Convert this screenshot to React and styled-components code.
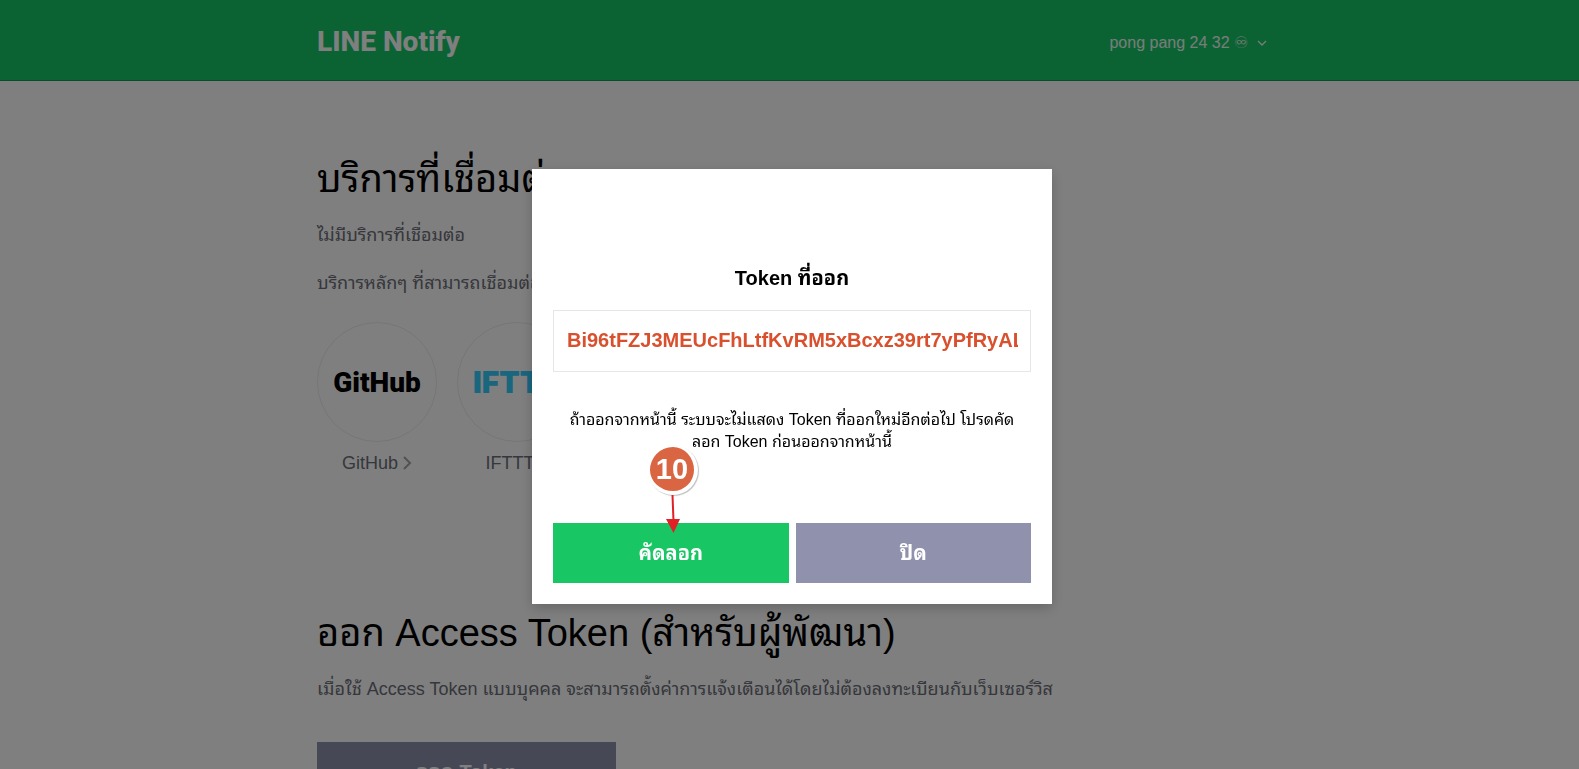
import { useState } from 'react';
import styled, { createGlobalStyle } from 'styled-components';

const GlobalStyle = createGlobalStyle`
    * {
        box-sizing: border-box;
    }

    body {
        margin: 0;
        height: 100vh;
        overflow: hidden;
        background: #ffffff;
        font-family: 'Liberation Sans', Arial, 'Noto Sans Thai Looped', 'Noto Sans Thai', sans-serif;
    }

    h1, h2, p, ul {
        margin: 0;
        padding: 0;
    }
`;

const Header = styled.header`
    padding-left: 5px;
    background: #17c667;
    border-bottom: 1px solid #12994f;
`;

const Container = styled.div`
    max-width: 950px;
    margin: 0 auto;
`;

const HeaderContainer = styled(Container)`
    display: flex;
    justify-content: space-between;
    align-items: center;
    height: 80px;
    padding-top: 4px;
`;

const Logo = styled.a`
    font-family: Roboto, sans-serif;
    font-size: 28px;
    font-weight: 800;
    line-height: 32px;
    color: #ffffff;
    text-decoration: none;
`;

const UserButton = styled.button`
    display: flex;
    align-items: center;
    gap: 9px;
    padding: 2px 0 0;
    border: 0;
    background: none;
    font-family: inherit;
    font-size: 16px;
    line-height: 20px;
    color: #f0faf4;
`;

const Main = styled.main`
    padding: 72px 0 0 5px;
`;

const Section = styled.section`
    padding-bottom: 133px;
`;

const Title = styled.h1`
    font-size: 38px;
    font-weight: 400;
    line-height: 52px;
    color: #000000;
`;

const Text = styled.p`
    margin-top: 18px;
    font-size: 18px;
    line-height: 30px;
    color: #6d6f78;

    ${Title} + & {
        margin-top: 15px;
    }
`;

const ServiceList = styled.ul`
    display: flex;
    gap: 20px;
    margin-top: 24px;
    list-style: none;
`;

const Service = styled.li`
    width: 120px;
`;

const ServiceLink = styled.a`
    display: flex;
    flex-direction: column;
    align-items: center;
    gap: 10px;
    color: #6d6f78;
    text-decoration: none;
`;

const ServiceLogo = styled.span`
    display: flex;
    justify-content: center;
    align-items: center;
    width: 120px;
    height: 120px;
    border: 1px solid #ececec;
    border-radius: 50%;
    font-family: ${({ $font }) => $font}, sans-serif;
    font-size: ${({ $size }) => $size}px;
    font-weight: 900;
    color: ${({ $color }) => $color};
`;

const ServiceName = styled.span`
    display: flex;
    align-items: center;
    gap: 5px;
    font-size: 18px;
    line-height: 22px;
`;

const Button = styled.button`
    height: 60px;
    padding: 0 0 4px;
    border: 0;
    background: ${({ $primary }) => ($primary ? '#18c664' : '#8f91ad')};
    font-family: inherit;
    font-size: 20px;
    font-weight: 700;
    color: #ffffff;
`;

const IssueButton = styled(Button)`
    width: 299px;
    margin-top: 38px;
`;

const Overlay = styled.div`
    position: fixed;
    inset: 0;
    display: flex;
    justify-content: center;
    align-items: center;
    padding: 4px 0 0 5px;
    background: rgba(0, 0, 0, 0.5);
`;

const Modal = styled.div`
    width: 520px;
    padding: 93px 21px 21px;
    background: #ffffff;
    box-shadow: 0 4px 12px rgba(0, 0, 0, 0.2);
`;

const ModalTitle = styled.h2`
    font-size: 20px;
    font-weight: 700;
    line-height: 32px;
    text-align: center;
    color: #000000;
`;

const TokenInput = styled.input`
    display: block;
    width: 100%;
    height: 62px;
    margin-top: 16px;
    padding: 0 12px 2px 13px;
    border: 1px solid #e6e6e6;
    border-radius: 0;
    background: #ffffff;
    font-family: inherit;
    font-size: 20px;
    font-weight: 700;
    color: #d9502e;
    outline: none;
`;

const Notice = styled.p`
    margin-top: 37px;
    font-size: 16px;
    line-height: 22px;
    text-align: center;
    color: #000000;
`;

const ButtonContainer = styled.div`
    position: relative;
    display: grid;
    grid-template-columns: 1fr 1fr;
    gap: 7px;
    margin-top: 70px;
`;

const Step = styled.div`
    position: absolute;
    left: 95px;
    bottom: 50px;
    display: flex;
    flex-direction: column;
    align-items: center;
    pointer-events: none;
`;

const StepNumber = styled.span`
    display: flex;
    justify-content: center;
    align-items: center;
    width: 50px;
    height: 50px;
    border: solid #ffffff;
    border-width: 2px 4px 4px 2px;
    border-radius: 50%;
    background: #d96543;
    box-shadow: 1px 1px 1px rgba(0, 0, 0, 0.25);
    font-size: 29px;
    font-weight: 700;
    color: #ffffff;
`;

const services = [
    { name: 'GitHub', font: 'Roboto', size: 28, color: '#000000' },
    { name: 'IFTTT', font: 'Inter', size: 30, color: '#33ccff' },
];

export default function App() {
    const [open, setOpen] = useState(true);
    const token = 'Bi96tFZJ3MEUcFhLtfKvRM5xBcxz39rt7yPfRyALq8w';

    return (
        <>
            <GlobalStyle />
            <Header>
                <HeaderContainer>
                    <Logo href="#">LINE Notify</Logo>
                    <UserButton type="button">
                        pong pang 24 32 ♾
                        <svg width="10" height="6" viewBox="0 0 10 6" fill="none" stroke="currentColor" strokeWidth="1.3">
                            <path d="M1 1l4 4 4-4" />
                        </svg>
                    </UserButton>
                </HeaderContainer>
            </Header>

            <Main>
                <Container>
                    <Section>
                        <Title>บริการที่เชื่อมต่อ</Title>
                        <Text>ไม่มีบริการที่เชื่อมต่อ</Text>
                        <Text>บริการหลักๆ ที่สามารถเชื่อมต่อได้</Text>
                        <ServiceList>
                            {services.map(({ name, font, size, color }) => (
                                <Service key={name}>
                                    <ServiceLink href="#">
                                        <ServiceLogo $font={font} $size={size} $color={color}>
                                            {name}
                                        </ServiceLogo>
                                        <ServiceName>
                                            {name}
                                            <svg width="9" height="14" viewBox="0 0 9 14" fill="none" stroke="#a4a4a4" strokeWidth="2">
                                                <path d="M1 1l6 6-6 6" />
                                            </svg>
                                        </ServiceName>
                                    </ServiceLink>
                                </Service>
                            ))}
                        </ServiceList>
                    </Section>
                    <Section>
                        <Title as="h2">ออก Access Token (สำหรับผู้พัฒนา)</Title>
                        <Text>เมื่อใช้ Access Token แบบบุคคล จะสามารถตั้งค่าการแจ้งเตือนได้โดยไม่ต้องลงทะเบียนกับเว็บเซอร์วิส</Text>
                        <IssueButton type="button" onClick={() => setOpen(true)}>
                            ออก Token
                        </IssueButton>
                    </Section>
                </Container>
            </Main>

            {open && (
                <Overlay>
                    <Modal role="dialog" aria-modal="true" aria-labelledby="token-title">
                        <ModalTitle id="token-title">Token ที่ออก</ModalTitle>
                        <TokenInput type="text" aria-labelledby="token-title" value={token} readOnly />
                        <Notice>
                            ถ้าออกจากหน้านี้ ระบบจะไม่แสดง Token ที่ออกใหม่อีกต่อไป โปรดคัด
                            <br />
                            ลอก Token ก่อนออกจากหน้านี้
                        </Notice>
                        <ButtonContainer>
                            <Button type="button" $primary onClick={() => navigator.clipboard.writeText(token)}>
                                คัดลอก
                            </Button>
                            <Button type="button" onClick={() => setOpen(false)}>
                                ปิด
                            </Button>
                            <Step>
                                <StepNumber>10</StepNumber>
                                <svg width="16" height="38" viewBox="0 0 16 38">
                                    <path d="M7.5 0L8.5 26" stroke="#e01f27" strokeWidth="2" />
                                    <path d="M1 24h14L8.5 38z" fill="#e01f27" />
                                </svg>
                            </Step>
                        </ButtonContainer>
                    </Modal>
                </Overlay>
            )}
        </>
    );
}
